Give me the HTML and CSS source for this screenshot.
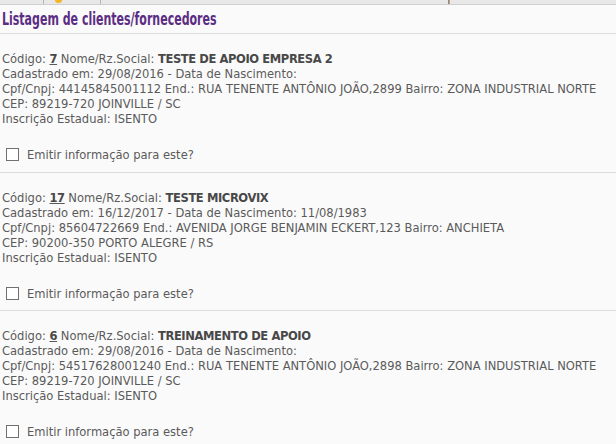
FILE: index.html
```html
<!DOCTYPE html>
<html lang="pt-BR">
<head>
  <meta charset="UTF-8" />
  <title>Listagem de clientes/fornecedores</title>
  <link rel="stylesheet" href="styles.css">
</head>
<body>

  <div class="toolbar">
    <span class="tb-sep first"></span>
    <span class="tb-star"></span>
    <span class="tb-sep second"></span>
    <span class="tb-mark"></span>
  </div>

  <div class="title-bar">
    <h1 class="title">Listagem de clientes/fornecedores</h1>
  </div>

  <div class="record">
    <p class="info">
      Código: <u><b>7</b></u> Nome/Rz.Social: <b>TESTE DE APOIO EMPRESA 2</b><br>
      Cadastrado em: 29/08/2016 - Data de Nascimento:<br>
      Cpf/Cnpj: 44145845001112 End.: RUA TENENTE ANTÔNIO JOÃO,2899 Bairro: ZONA INDUSTRIAL NORTE<br>
      CEP: 89219-720 JOINVILLE / SC<br>
      Inscrição Estadual: ISENTO
    </p>
    <label class="check"><input type="checkbox"> Emitir informação para este?</label>
  </div>

  <div class="record">
    <p class="info">
      Código: <u><b>17</b></u> Nome/Rz.Social: <b>TESTE MICROVIX</b><br>
      Cadastrado em: 16/12/2017 - Data de Nascimento: 11/08/1983<br>
      Cpf/Cnpj: 85604722669 End.: AVENIDA JORGE BENJAMIN ECKERT,123 Bairro: ANCHIETA<br>
      CEP: 90200-350 PORTO ALEGRE / RS<br>
      Inscrição Estadual: ISENTO
    </p>
    <label class="check"><input type="checkbox"> Emitir informação para este?</label>
  </div>

  <div class="record">
    <p class="info">
      Código: <u><b>6</b></u> Nome/Rz.Social: <b>TREINAMENTO DE APOIO</b><br>
      Cadastrado em: 29/08/2016 - Data de Nascimento:<br>
      Cpf/Cnpj: 54517628001240 End.: RUA TENENTE ANTÔNIO JOÃO,2898 Bairro: ZONA INDUSTRIAL NORTE<br>
      CEP: 89219-720 JOINVILLE / SC<br>
      Inscrição Estadual: ISENTO
    </p>
    <label class="check"><input type="checkbox"> Emitir informação para este?</label>
  </div>

</body>
</html>
```

FILE: styles.css
```css
body {
  margin: 0;
  background: #fafafa;
  color: #5a5a5a;
  font-family: "DejaVu Sans Condensed", "DejaVu Sans", sans-serif;
  font-size: 12.8px;
  overflow: hidden;
}

.toolbar {
  display: flex;
  height: 4px;
  background: #e8e8e8;
  border-bottom: 1px solid #cfcfcf;
  overflow: hidden;
}

.tb-sep {
  width: 1px;
  background: #b5b5b5;
}

.tb-sep.first {
  margin-left: 43px;
}

.tb-star {
  width: 7px;
  height: 3px;
  margin-left: 11px;
  background: #f2b628;
  border-radius: 0 0 3px 3px;
}

.tb-sep.second {
  margin-left: 38px;
}

.tb-mark {
  width: 2px;
  margin-left: 347px;
  background: linear-gradient(90deg, #6a8fd0 50%, #e0a040 50%);
}

.title-bar {
  padding: 3px 2px;
  border-bottom: 1px solid #dddddd;
}

.title {
  margin: 0;
  color: #5b2d84;
  font-size: 17px;
  line-height: 22px;
  font-weight: bold;
  white-space: nowrap;
  transform: scaleX(0.72);
  transform-origin: left center;
}

.record {
  padding: 17px 2px 9.5px;
  border-bottom: 1px solid #dddddd;
}

.info {
  margin: 0;
  line-height: 15px;
  white-space: nowrap;
}

.info b {
  color: #484848;
  letter-spacing: -0.4px;
}

.check {
  display: flex;
  align-items: center;
  gap: 8px;
  margin-top: 21px;
  padding-left: 4px;
  line-height: 15px;
}

.check input {
  width: 13px;
  height: 13px;
  margin: 0;
  appearance: none;
  background: #fff;
  border: 1px solid #707070;
}
```
